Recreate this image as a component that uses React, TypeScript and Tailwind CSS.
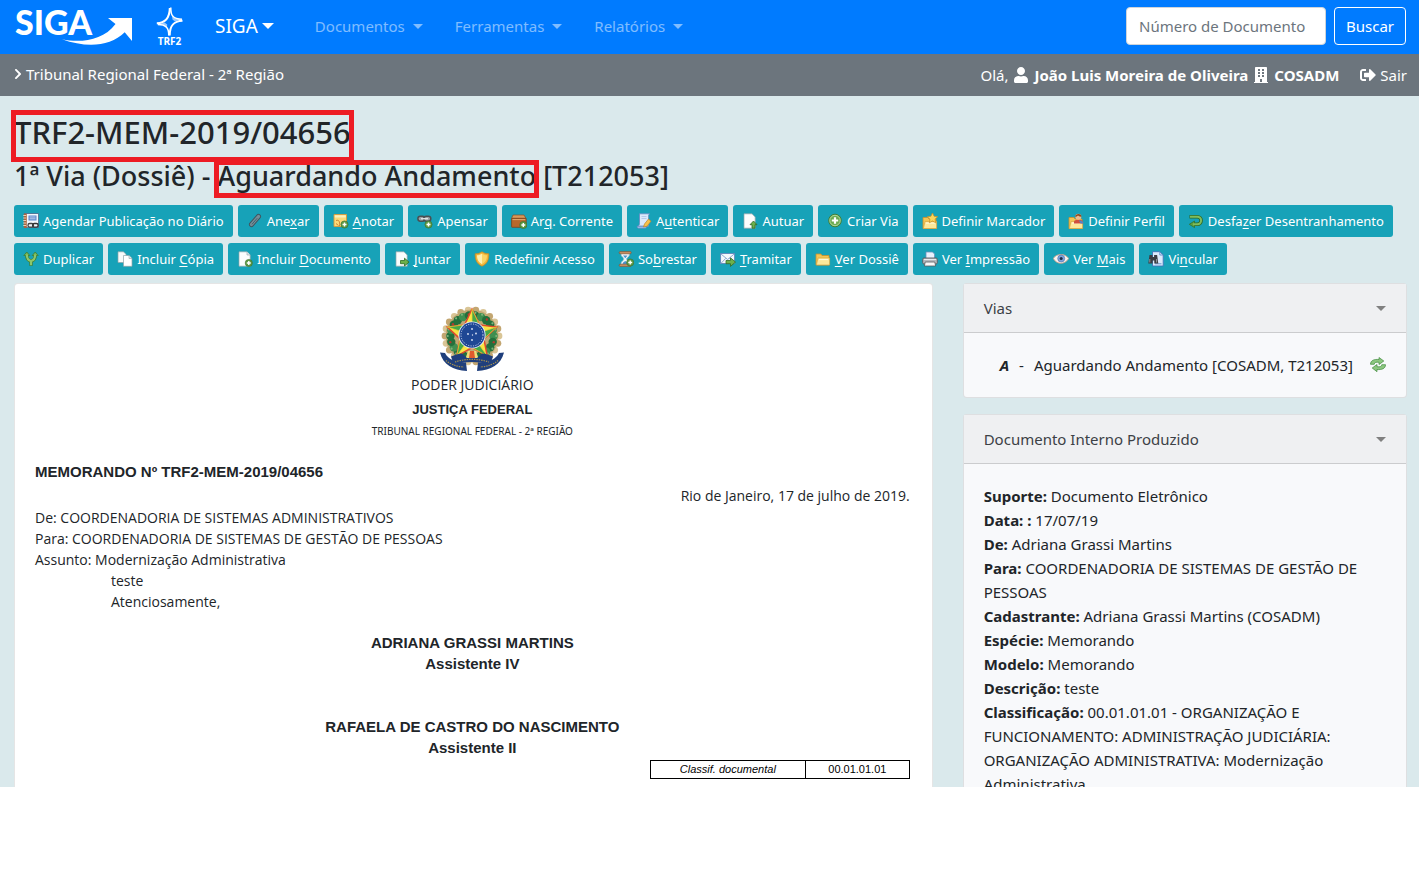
import type { ReactNode } from "react";
import { FaBuilding, FaChevronRight, FaSignOutAlt, FaUser } from "react-icons/fa";

/* ---------- small icon parts ---------- */

function Svg16({ children }: { children: ReactNode }) {
  return (
    <svg viewBox="0 0 16 16" className="size-4 shrink-0" aria-hidden="true">
      {children}
    </svg>
  );
}

function Plus({ x = 12, y = 12, r = 3.6 }: { x?: number; y?: number; r?: number }) {
  const a = r * 0.55;
  return (
    <g>
      <circle cx={x} cy={y} r={r} fill="#5d9a45" stroke="#3c6f2b" strokeWidth=".6" />
      <path d={`M${x - a} ${y}h${a * 2}M${x} ${y - a}v${a * 2}`} stroke="#fff" strokeWidth={r * 0.4} />
    </g>
  );
}

function Sheet() {
  return <path d="M2 .8h8l3.2 3.2v11.2H2z" fill="#fcfdfd" stroke="#8fa3a8" strokeWidth=".7" />;
}

function Arrow({ d }: { d: string }) {
  return <path d={d} fill="#6cb04c" stroke="#2f6b25" strokeWidth=".8" strokeLinejoin="round" />;
}

function Folder({ y = 0 }: { y?: number }) {
  return (
    <g transform={`translate(0 ${y})`}>
      <path d="M1 4.5V3h5l1 1.5h7V14H1z" fill="#f3c555" stroke="#c98f2b" strokeWidth=".8" />
      <path d="M3 7h11.6V14H1.4z" fill="#fde89a" stroke="#d9a640" strokeWidth=".7" />
      <path d="M4 8.6h9" stroke="#fffbe0" />
    </g>
  );
}

const icons = {
  report: (
    <Svg16>
      <rect x="1.5" y=".6" width="14" height="14" fill="#f3f6fb" stroke="#49678c" strokeWidth=".8" />
      <rect x=".8" y=".6" width="3" height="14.4" fill="#a9643f" />
      <path d="M.2 2.5h3M.2 5h3M.2 7.500h3M.2 10h3M.2 12.500h3" stroke="#f0d9c6" strokeWidth=".9" />
      <rect x="5.500" y="2.500" width="8" height="5" fill="#5b86cc" />
      <path d="M6.500 4h6M6.500 5.800h6" stroke="#d5e2f6" strokeWidth=".8" />
      <rect x="5" y="10.500" width="5.500" height="3.600" rx="1.700" fill="none" stroke="#444" strokeWidth="1.300" />
      <rect x="9.600" y="10.500" width="5.500" height="3.600" rx="1.700" fill="none" stroke="#333" strokeWidth="1.300" />
    </Svg16>
  ),
  attach: (
    <Svg16>
      <path d="M4.500 11.500 11.500 3.500" stroke="#3f545d" strokeWidth="5" strokeLinecap="round" />
      <path d="M4.500 11.500 11.500 3.500" stroke="#748e99" strokeWidth="3.200" strokeLinecap="round" />
      <path d="M5.200 11 10 5.500" stroke="#45616d" strokeWidth="1" strokeLinecap="round" />
    </Svg16>
  ),
  note: (
    <Svg16>
      <path d="M1 1.500h12.500v8L9.500 13.500H1z" fill="#fbd978" stroke="#d99a3a" strokeWidth=".9" />
      <path d="M1.800 2.300h11v2.200h-11z" fill="#fdf0bd" />
      <path d="M3 7.500c3-1 4 1 3.500 5.500M3 10.500l2.500 2" stroke="#c97a2b" strokeWidth=".9" fill="none" />
      <Plus x={11.500} y={11.500} />
    </Svg16>
  ),
  link: (
    <Svg16>
      <rect x=".9" y="3.200" width="7" height="5" rx="2.400" fill="#9aa3a6" stroke="#4a4f53" strokeWidth="1.500" />
      <rect x="6.800" y="3.200" width="7" height="5" rx="2.400" fill="#9aa3a6" stroke="#4a4f53" strokeWidth="1.500" />
      <path d="M4 5.700h7" stroke="#e3e7e8" strokeWidth="1.300" />
      <Plus x={11.500} y={11.500} />
    </Svg16>
  ),
  box: (
    <Svg16>
      <path d="M2 2h11l2 3.500H.5z" fill="#d89a5b" stroke="#8a4f22" strokeWidth=".7" />
      <rect x=".6" y="5.300" width="14.600" height="9" rx=".6" fill="#b9682c" stroke="#7d431a" strokeWidth=".8" />
      <path d="M1.500 6.600h12.800" stroke="#e3a96f" />
      <Plus x={12.300} y={12} />
    </Svg16>
  ),
  sign: (
    <Svg16>
      <path d="M3.500.8h10.200c-1.500 1-1.200 2.200-1.200 3.500v9H1.800c1.700-1 1.700-2 1.700-3.500z" fill="#dbe9fb" stroke="#6289c2" strokeWidth=".8" />
      <path d="M1 13.200h9.500c0 1.800-.8 2-2 2H2.500c-1 0-1.500-1-1.500-2z" fill="#aac6ee" stroke="#5a82bd" strokeWidth=".7" />
      <path d="M5.500 3.500h5M5.500 5.500h5" stroke="#a9c2e6" strokeWidth=".8" />
      <path d="m7.500 14 1-3 4-5 2.500 2.200-4 5z" fill="#f6c24a" stroke="#b9832a" strokeWidth=".7" />
    </Svg16>
  ),
  pageUp: (
    <Svg16>
      <Sheet />
      <Arrow d="m11.500 8 3.500 3.700h-2v3.500h-3v-3.500H8z" />
    </Svg16>
  ),
  add: (
    <Svg16>
      <circle cx="8" cy="7.500" r="6.300" fill="#6bab52" stroke="#3f7a30" strokeWidth=".9" />
      <circle cx="8" cy="7.500" r="5.200" fill="none" stroke="#b7dba6" strokeWidth=".9" />
      <path d="M8 4.300v6.400M4.800 7.500h6.400" stroke="#fff" strokeWidth="2.200" />
    </Svg16>
  ),
  folderStar: (
    <Svg16>
      <Folder y={1.500} />
      <path d="m10.500 0 1.600 3.300 3.600.4-2.700 2.500.8 3.600-3.300-1.800-3.200 1.800.7-3.600L5.300 3.700l3.600-.4z" fill="#fbd65a" stroke="#c88d22" strokeWidth=".7" />
    </Svg16>
  ),
  folderUser: (
    <Svg16>
      <Folder y={1.500} />
      <path d="M6 8.500c0-2.500 9-2.500 9 0v2H6z" fill="#cf4f3d" />
      <path d="M11 7.500c2.500 0 4 .5 4.500 3h-3z" fill="#5a83c4" />
      <circle cx="10.300" cy="3.700" r="3" fill="#eebb90" />
      <path d="M7.200 3.700C7 .4 13.500-.4 13.500 3.700c-2 .2-3-1-3.500-1.200-.8.900-1.800 1.200-2.800 1.200z" fill="#8a4b22" />
    </Svg16>
  ),
  undo: (
    <Svg16>
      <path d="M1.500 3.700h7.800a3.800 3.800 0 0 1 0 7.600H6" fill="none" stroke="#2f6b25" strokeWidth="3.600" />
      <path d="M6.500 8v6.600L1.300 11.300z" fill="#5d9f3f" stroke="#2f6b25" strokeWidth=".7" />
      <path d="M2 3.700h7.300a3.800 3.800 0 0 1 0 7.600H5" fill="none" stroke="#7fbd5f" strokeWidth="2" />
    </Svg16>
  ),
  fork: (
    <Svg16>
      <path d="M8 14.700v-5M8 10C3.500 9 3.800 6 3.800 3.500M8 10c4.500-1 4.200-4 4.200-6.500" fill="none" stroke="#3b7a2d" strokeWidth="3.400" />
      <path d="M.8 4.500 3.800 1l3 3.500zM9.200 4.500l3-3.500 3 3.500z" fill="#74b254" stroke="#3b7a2d" strokeWidth=".7" />
      <path d="M8 14.300V10C3.800 9 3.800 6 3.800 3.500M8 10c4.200-1 4.200-4 4.200-6.500" fill="none" stroke="#8cc66b" strokeWidth="2.200" />
    </Svg16>
  ),
  copy: (
    <Svg16>
      <path d="M1 .8h5.500L9 3.300v8.200H1z" fill="#f7fafa" stroke="#8fa3a8" strokeWidth=".7" />
      <path d="M6.500 4.500H12l3 3v7.800H6.500z" fill="#fff" stroke="#8fa3a8" strokeWidth=".7" />
      <path d="M12 4.500v3h3" fill="#dfe8ea" stroke="#8fa3a8" strokeWidth=".6" />
    </Svg16>
  ),
  pageAdd: (
    <Svg16>
      <Sheet />
      <path d="M10 .8V4h3.200" fill="#dfe8ea" stroke="#8fa3a8" strokeWidth=".6" />
      <Plus x={11.800} y={12} />
    </Svg16>
  ),
  pageGo: (
    <Svg16>
      <Sheet />
      <Arrow d="M6.500 9.500h4V7.200l4.500 3.900-4.500 3.900v-2.300h-4z" />
    </Svg16>
  ),
  shield: (
    <Svg16>
      <path d="M1.200 2.800C4 3 6 2 8 .8c2 1.200 4 2.200 6.800 2 .2 5.500-1.300 10-6.800 12.400C2.500 12.800 1 8.300 1.200 2.800z" fill="#f3b63a" stroke="#c98a20" strokeWidth=".8" />
      <path d="M3 4.300C5 4.300 6.500 3.500 8 2.700v10.500C4.300 11 3 8.500 3 4.300z" fill="#fff0b0" />
      <path d="M8 2.700c1.500.8 3 1.600 5 1.600 0 4.200-1.300 6.700-5 8.900z" fill="#fbd566" />
    </Svg16>
  ),
  hourglass: (
    <Svg16>
      <path d="M3 2.500c0 3.500 3 4 3 5.500s-3 2-3 5.500h8.500C11.500 10 8.500 9.500 8.500 8s3-2 3-5.500z" fill="#f2f7fa" stroke="#b4c7d3" strokeWidth=".8" />
      <path d="M5 4.500h4.500L7.300 7.200zM4.500 13c.5-2 1.800-2.500 2.800-3C8.300 10.500 9.500 11 10 13z" fill="#4a94cf" />
      <rect x="1.200" y=".6" width="12" height="2.200" rx="1" fill="#c98f62" stroke="#7d4d2b" strokeWidth=".6" />
      <rect x="1.200" y="13.200" width="12" height="2.200" rx="1" fill="#c98f62" stroke="#7d4d2b" strokeWidth=".6" />
      <Plus x={12.200} y={11.500} />
    </Svg16>
  ),
  mailGo: (
    <Svg16>
      <rect x=".6" y="2.500" width="14" height="10" fill="#f5f8fc" stroke="#5f86ba" strokeWidth=".9" />
      <path d="m1 3 6.600 5.500L14.200 3M1 12.300l4.800-5M14.200 12.300l-4.800-5" fill="none" stroke="#7f9fcb" strokeWidth=".9" />
      <Arrow d="M6 9.500h4.500V6.800l5 4.300-5 4.300v-2.700H6z" />
    </Svg16>
  ),
  folder: (
    <Svg16>
      <Folder />
    </Svg16>
  ),
  printer: (
    <Svg16>
      <path d="M4 1h6.500L12.500 3v5H4z" fill="#e8f1fc" stroke="#6d90bb" strokeWidth=".8" />
      <rect x=".7" y="7" width="14.600" height="6" rx="1.300" fill="#b4b9be" stroke="#55595d" strokeWidth=".9" />
      <path d="M2 8.500h12" stroke="#e8eaec" />
      <path d="M3.200 11h9.600l.8 4H2.400z" fill="#f7f8f9" stroke="#55595d" strokeWidth=".8" />
    </Svg16>
  ),
  eye: (
    <Svg16>
      <path d="M.3 7.500C3 2.500 12 1.800 15.700 7.500 12 14 3.500 13.800.3 7.500z" fill="#fbf3ef" stroke="#c9a08a" strokeWidth=".9" />
      <circle cx="8.200" cy="7.500" r="3.500" fill="#7ea3da" stroke="#4a6eac" strokeWidth=".6" />
      <circle cx="8.200" cy="7.500" r="1.500" fill="#1d2a44" />
    </Svg16>
  ),
  findPage: (
    <Svg16>
      <path d="M4.500.7h7.300L15.200 4v11H4.500z" fill="#dceafb" stroke="#3f73b8" strokeWidth=".9" />
      <path d="M11.800.7V4h3.400M7 12.800h6.500" fill="none" stroke="#5c8cca" strokeWidth=".9" />
      <path d="M1.500 4h3v2h1.600V4h3l1.200 8.500H6.300V9.500H4.600v3H.3z" fill="#3a3d42" />
      <path d="M1.800 8v3.500M8.600 8v3.500" stroke="#9aa0a8" strokeWidth=".9" />
    </Svg16>
  ),
};

type IconName = keyof typeof icons;

function RefreshIcon() {
  return (
    <svg viewBox="0 0 16 16" className="size-4 shrink-0" aria-hidden="true">
      <path d="M.5 7.300C.5 3.500 4 2 9 2.500V.5l4.800 3.500L9 7.500V5.300C6 4.800 4.500 5.500 4.200 7.300z" fill="#8cc77f" stroke="#3f8a3c" strokeWidth=".7" strokeLinejoin="round" />
      <path d="M15.500 7.700c0 3.800-3.500 5.300-8.500 4.800v2.200l-4.800-3.700L7 7.500v2.200c3 .5 4.500-.2 4.800-2z" fill="#8cc77f" stroke="#3f8a3c" strokeWidth=".7" strokeLinejoin="round" />
    </svg>
  );
}

function SigaLogo() {
  return (
    <svg viewBox="14 1 120 52" className="h-[52px] w-[120px] shrink-0 overflow-visible" role="img" aria-label="SIGA">
      <text x="15" y="36" fill="#fff" fontFamily="Lato, sans-serif" fontWeight="900" fontSize="34">
        SIGA
      </text>
      <path d="M62 40.300C80 44 103 42 115.500 25L108 19h24v23l-7.300-8.700C110 48 86 49 62 40.300z" fill="#fff" />
    </svg>
  );
}

function Trf2Logo() {
  return (
    <svg viewBox="156 1 28 52" className="h-[52px] w-7 shrink-0 overflow-visible" role="img" aria-label="TRF2">
      <path d="M170.800 8.500c-.2 8 2 11.500 11.200 11.800" fill="none" stroke="#fff" strokeWidth="1.500" />
      <path d="M182.500 21.800c-9 .3-12.800 4.700-12.800 14.700" fill="none" stroke="#fff" strokeWidth="2" />
      <path d="M168.800 36.500c0-7.500-2.500-11-11-11" fill="none" stroke="#fff" strokeWidth="1.500" />
      <path d="M156.800 24.300c9-.3 12.800-5.300 13-15.300" fill="none" stroke="#fff" strokeWidth="2" />
      <path d="M182 20c-5.500 0-8.500-1-10-3l.5 3.500 2.500 2zM157.500 25.500c5 0 8 1 9.500 3l.2-3-2.700-2z" fill="#fff" fillOpacity=".6" />
      <text x="169.500" y="46" textAnchor="middle" fill="#fff" fontFamily="'Open Sans', sans-serif" fontWeight="700" fontSize="10">
        TRF2
      </text>
    </svg>
  );
}

const leaves = Array.from({ length: 22 }, (_, i) => {
  const a = (i / 22) * Math.PI * 2;
  return { x: 32 + Math.cos(a) * 27, y: 30 + Math.sin(a) * 26 };
});

function starPoints(cx: number, cy: number, outer: number, inner: number) {
  return Array.from({ length: 10 }, (_, i) => {
    const r = i % 2 === 0 ? outer : inner;
    const a = -Math.PI / 2 + (i * Math.PI) / 5;
    return [cx + Math.cos(a) * r, cy + Math.sin(a) * r];
  });
}

function CoatOfArms() {
  const star = starPoints(32, 29, 26, 12.5);
  return (
    <svg viewBox="0 0 64 66" className="h-[66px] w-16" role="img" aria-label="Brasão da República">
      {leaves.map((l, i) => (
        <circle key={i} cx={l.x} cy={l.y} r="3.400" fill={i % 2 ? "#c3a671" : "#d9c596"} />
      ))}
      <circle cx="32" cy="30" r="26.500" fill="#c0a873" />
      {leaves.map((l, i) => (
        <circle key={i} cx={32 + (l.x - 32) * 0.8} cy={30 + (l.y - 30) * 0.8} r="4.200" fill={i % 3 ? "#23703c" : "#3f8f50"} />
      ))}
      {leaves.map((l, i) =>
        i % 3 === 1 ? (
          <circle key={i} cx={32 + (l.x - 32) * 0.84} cy={30 + (l.y - 30) * 0.84} r="1.200" fill="#b3392c" />
        ) : (
          <circle key={i} cx={32 + (l.x - 32) * 0.9} cy={30 + (l.y - 30) * 0.9} r="1.100" fill="#7fb27c" />
        ),
      )}
      <polygon points={star.map((p) => p.join(",")).join(" ")} fill="#f8e545" stroke="#df4a2c" strokeWidth="1.500" />
      {star.map((p, i) =>
        i % 2 === 0 ? (
          <polygon key={i} points={`32,29 ${p.join(",")} ${star[(i + 1) % 10].join(",")}`} fill="#46a848" stroke="#f3d235" strokeWidth=".7" />
        ) : null,
      )}
      <circle cx="32" cy="29" r="13.600" fill="#e8eefa" />
      <circle cx="32" cy="29" r="12.700" fill="#1e4794" />
      <circle cx="32" cy="29" r="11" fill="none" stroke="#c8d5ee" strokeWidth="1" strokeDasharray="1.200 1.300" />
      <g fill="#dfe8f8">
        <circle cx="32" cy="23" r=".9" />
        <circle cx="28" cy="28" r=".9" />
        <circle cx="36" cy="27.500" r=".9" />
        <circle cx="32" cy="34" r=".9" />
        <circle cx="32.500" cy="29" r=".7" />
      </g>
      <path d="M28 45h8l3 9H25z" fill="#f0dc78" />
      <path d="M30 45h4l1 7h-6z" fill="#e05a2c" />
      <path d="M0 46.500 5 47c3 6 10 9.500 21 9.500L27 65C13 64.500 3 58.500 0 46.500zM64 46.500 59 47c-3 6-10 9.500-21 9.500L37 65c14-.5 24-6.500 27-18.500z" fill="#1f3f7c" />
      <path d="M11 50.500c3-1.500 8-3 11-3l5 4.500h10l5-4.500c3 0 8 1.500 11 3L50 59c-10-4-26-4-36 0z" fill="#1f3f7c" />
      <path d="M15 56c10-3.500 24-3.500 34 0M6 54.500c4 3.500 10 6 18 6.500M58 54.500c-4 3.500-10 6-18 6.500" fill="none" stroke="#a8924e" strokeWidth="1.200" strokeDasharray="1.400 1" />
    </svg>
  );
}

/* ---------- building blocks ---------- */

function Caret({ className = "" }: { className?: string }) {
  return <span className={`inline-block border-x-[5px] border-t-[5px] border-x-transparent ${className}`} />;
}

function NavDropdown({ label }: { label: string }) {
  return (
    <button type="button" className="flex items-center gap-2 text-[15px] text-white/50">
      {label}
      <Caret />
    </button>
  );
}

type Action = { icon: IconName; label: string; hot?: number };

const actionRows: Action[][] = [
  [
    { icon: "report", label: "Agendar Publicação no Diário" },
    { icon: "attach", label: "Anexar", hot: 3 },
    { icon: "note", label: "Anotar", hot: 0 },
    { icon: "link", label: "Apensar" },
    { icon: "box", label: "Arq. Corrente", hot: 2 },
    { icon: "sign", label: "Autenticar", hot: 1 },
    { icon: "pageUp", label: "Autuar" },
    { icon: "add", label: "Criar Via" },
    { icon: "folderStar", label: "Definir Marcador" },
    { icon: "folderUser", label: "Definir Perfil" },
    { icon: "undo", label: "Desfazer Desentranhamento", hot: 5 },
  ],
  [
    { icon: "fork", label: "Duplicar" },
    { icon: "copy", label: "Incluir Cópia", hot: 8 },
    { icon: "pageAdd", label: "Incluir Documento", hot: 8 },
    { icon: "pageGo", label: "Juntar", hot: 0 },
    { icon: "shield", label: "Redefinir Acesso" },
    { icon: "hourglass", label: "Sobrestar", hot: 2 },
    { icon: "mailGo", label: "Tramitar", hot: 0 },
    { icon: "folder", label: "Ver Dossiê", hot: 0 },
    { icon: "printer", label: "Ver Impressão", hot: 4 },
    { icon: "eye", label: "Ver Mais", hot: 4 },
    { icon: "findPage", label: "Vincular", hot: 2 },
  ],
];

function ActionButton({ icon, label, hot }: Action) {
  return (
    <button type="button" className="flex h-8 items-center gap-1 rounded-[3px] bg-[#17a2b8] px-[9px] text-[13px] whitespace-nowrap text-white">
      {icons[icon]}
      <span>
        {hot === undefined ? (
          label
        ) : (
          <>
            {label.slice(0, hot)}
            <u className="underline-offset-2">{label[hot]}</u>
            {label.slice(hot + 1)}
          </>
        )}
      </span>
    </button>
  );
}

function Panel({ title, children }: { title: string; children: ReactNode }) {
  return (
    <section className="rounded border border-black/10 bg-[#f8f9fb]">
      <button type="button" className="flex h-[49px] w-full items-center justify-between border-b border-black/15 bg-[#eff0f2] px-5 text-[#3c4146]">
        {title}
        <Caret className="text-[#808080]" />
      </button>
      {children}
    </section>
  );
}

const details: [string, string][] = [
  ["Suporte:", "Documento Eletrônico"],
  ["Data: :", "17/07/19"],
  ["De:", "Adriana Grassi Martins"],
  ["Para:", "COORDENADORIA DE SISTEMAS DE GESTÃO DE PESSOAS"],
  ["Cadastrante:", "Adriana Grassi Martins (COSADM)"],
  ["Espécie:", "Memorando"],
  ["Modelo:", "Memorando"],
  ["Descrição:", "teste"],
  [
    "Classificação:",
    "00.01.01.01 - ORGANIZAÇÃO E FUNCIONAMENTO: ADMINISTRAÇÃO JUDICIÁRIA: ORGANIZAÇÃO ADMINISTRATIVA: Modernização Administrativa",
  ],
];

function Memo() {
  return (
    <article className="rounded border border-black/10 bg-white pt-[22px] pr-[22px] pb-5 pl-5 font-['Open_Sans',sans-serif] text-[14px] leading-[21px] text-[#212529]">
      <header className="flex flex-col items-center">
        <CoatOfArms />
        <p className="mt-[2px]">PODER JUDICIÁRIO</p>
        <p className="mt-1 font-['Liberation_Sans',sans-serif] text-[13px] font-bold">JUSTIÇA FEDERAL</p>
        <p className="mt-px font-['Noto_Sans',sans-serif] text-[10px]">TRIBUNAL REGIONAL FEDERAL - 2ª REGIÃO</p>
      </header>
      <p className="mt-[19px] font-['Liberation_Sans',sans-serif] text-[15px] font-bold">MEMORANDO Nº TRF2-MEM-2019/04656</p>
      <p className="mt-[3px] text-right">Rio de Janeiro, 17 de julho de 2019.</p>
      <p className="mt-px">De: COORDENADORIA DE SISTEMAS ADMINISTRATIVOS</p>
      <p>Para: COORDENADORIA DE SISTEMAS DE GESTÃO DE PESSOAS</p>
      <p>Assunto: Modernização Administrativa</p>
      <p className="pl-[76px]">teste</p>
      <p className="pl-[76px]">Atenciosamente,</p>
      <div className="mt-5 text-center font-['Liberation_Sans',sans-serif] text-[15px] font-bold">
        <p>ADRIANA GRASSI MARTINS</p>
        <p>Assistente IV</p>
        <p className="mt-[42px]">RAFAELA DE CASTRO DO NASCIMENTO</p>
        <p>Assistente II</p>
      </div>
      <table className="mt-[2px] ml-auto w-[260px] border-collapse text-center font-['Liberation_Sans',sans-serif] text-[11px] leading-[17px] text-black">
        <tbody>
          <tr>
            <td className="w-[60%] border border-black p-0 italic">Classif. documental</td>
            <td className="border border-black p-0">00.01.01.01</td>
          </tr>
        </tbody>
      </table>
    </article>
  );
}

export default function App() {
  return (
    <div className="flex h-screen flex-col bg-white pb-[87px] font-['Noto_Sans',sans-serif] text-[15px] leading-6 text-[#212529]">
      <nav className="flex h-[54px] shrink-0 items-center bg-[#007bff] pr-[13px] pb-[2px] pl-[14px] text-white">
        <SigaLogo />
        <span className="ml-[22px] flex">
          <Trf2Logo />
        </span>
        <button type="button" className="ml-[31px] flex items-center gap-1 text-[19px]">
          SIGA
          <Caret className="border-x-[6px] border-t-[6px]" />
        </button>
        <div className="ml-[41px] flex gap-8">
          <NavDropdown label="Documentos" />
          <NavDropdown label="Ferramentas" />
          <NavDropdown label="Relatórios" />
        </div>
        <form className="ml-auto flex gap-2" onSubmit={(e) => e.preventDefault()}>
          <input
            type="text"
            aria-label="Número de Documento"
            placeholder="Número de Documento"
            className="h-[38px] w-[200px] rounded border border-[#ced4da] bg-white px-3 text-[#212529] placeholder:text-[#6c757d]"
          />
          <button type="submit" className="h-[38px] rounded border border-white px-[11px]">
            Buscar
          </button>
        </form>
      </nav>

      <div className="flex h-[42px] shrink-0 items-center justify-between bg-[#6c757d] px-3 text-white">
        <a href="#orgao" className="flex items-center gap-[2px] pb-[2px]">
          <FaChevronRight className="size-3" />
          Tribunal Regional Federal - 2ª Região
        </a>
        <div className="flex items-center gap-[5px]">
          <span>Olá,</span>
          <FaUser className="size-4" />
          <b>João Luis Moreira de Oliveira</b>
          <FaBuilding className="size-4" />
          <b>COSADM</b>
          <a href="#sair" className="ml-4 flex items-center gap-1">
            <FaSignOutAlt className="size-4" />
            Sair
          </a>
        </div>
      </div>

      <main className="min-h-0 flex-1 overflow-hidden bg-[#dae9ec] pt-[17px] pr-3 pl-[14px]">
        <h1 className="text-[31px] leading-[38px] font-medium">
          <span className="relative">
            TRF2-MEM-2019/04656
            <span className="absolute -inset-x-[3px] -top-px -bottom-[9px] border-[5px] border-[#ed1c24]" />
          </span>
        </h1>
        <h2 className="mt-2 text-[27px] leading-[34px] font-medium">
          1ª Via (Dossiê) -{" "}
          <span className="relative">
            Aguardando Andamento
            <span className="absolute -inset-x-[3px] top-[3px] -bottom-1 border-[5px] border-[#ed1c24]" />
          </span>{" "}
          [T212053]
        </h2>

        <div className="mt-3 flex flex-col gap-[6px]">
          {actionRows.map((row, i) => (
            <div key={i} className="flex gap-[5px]">
              {row.map((a) => (
                <ActionButton key={a.label} {...a} />
              ))}
            </div>
          ))}
        </div>

        <div className="mt-2 grid grid-cols-3 items-start gap-[30px]">
          <div className="col-span-2">
            <Memo />
          </div>
          <aside className="flex flex-col gap-4">
            <Panel title="Vias">
              <div className="flex h-16 items-center pr-5 pl-9">
                <b className="italic">A</b>
                <span className="ml-[10px]">-</span>
                <span className="ml-[10px]">Aguardando Andamento [COSADM, T212053]</span>
                <a href="#atualizar" aria-label="Atualizar" className="ml-auto">
                  <RefreshIcon />
                </a>
              </div>
            </Panel>
            <Panel title="Documento Interno Produzido">
              <div className="p-5">
                {details.map(([k, v]) => (
                  <p key={k}>
                    <b>{k}</b> {v}
                  </p>
                ))}
              </div>
            </Panel>
          </aside>
        </div>
      </main>
    </div>
  );
}
